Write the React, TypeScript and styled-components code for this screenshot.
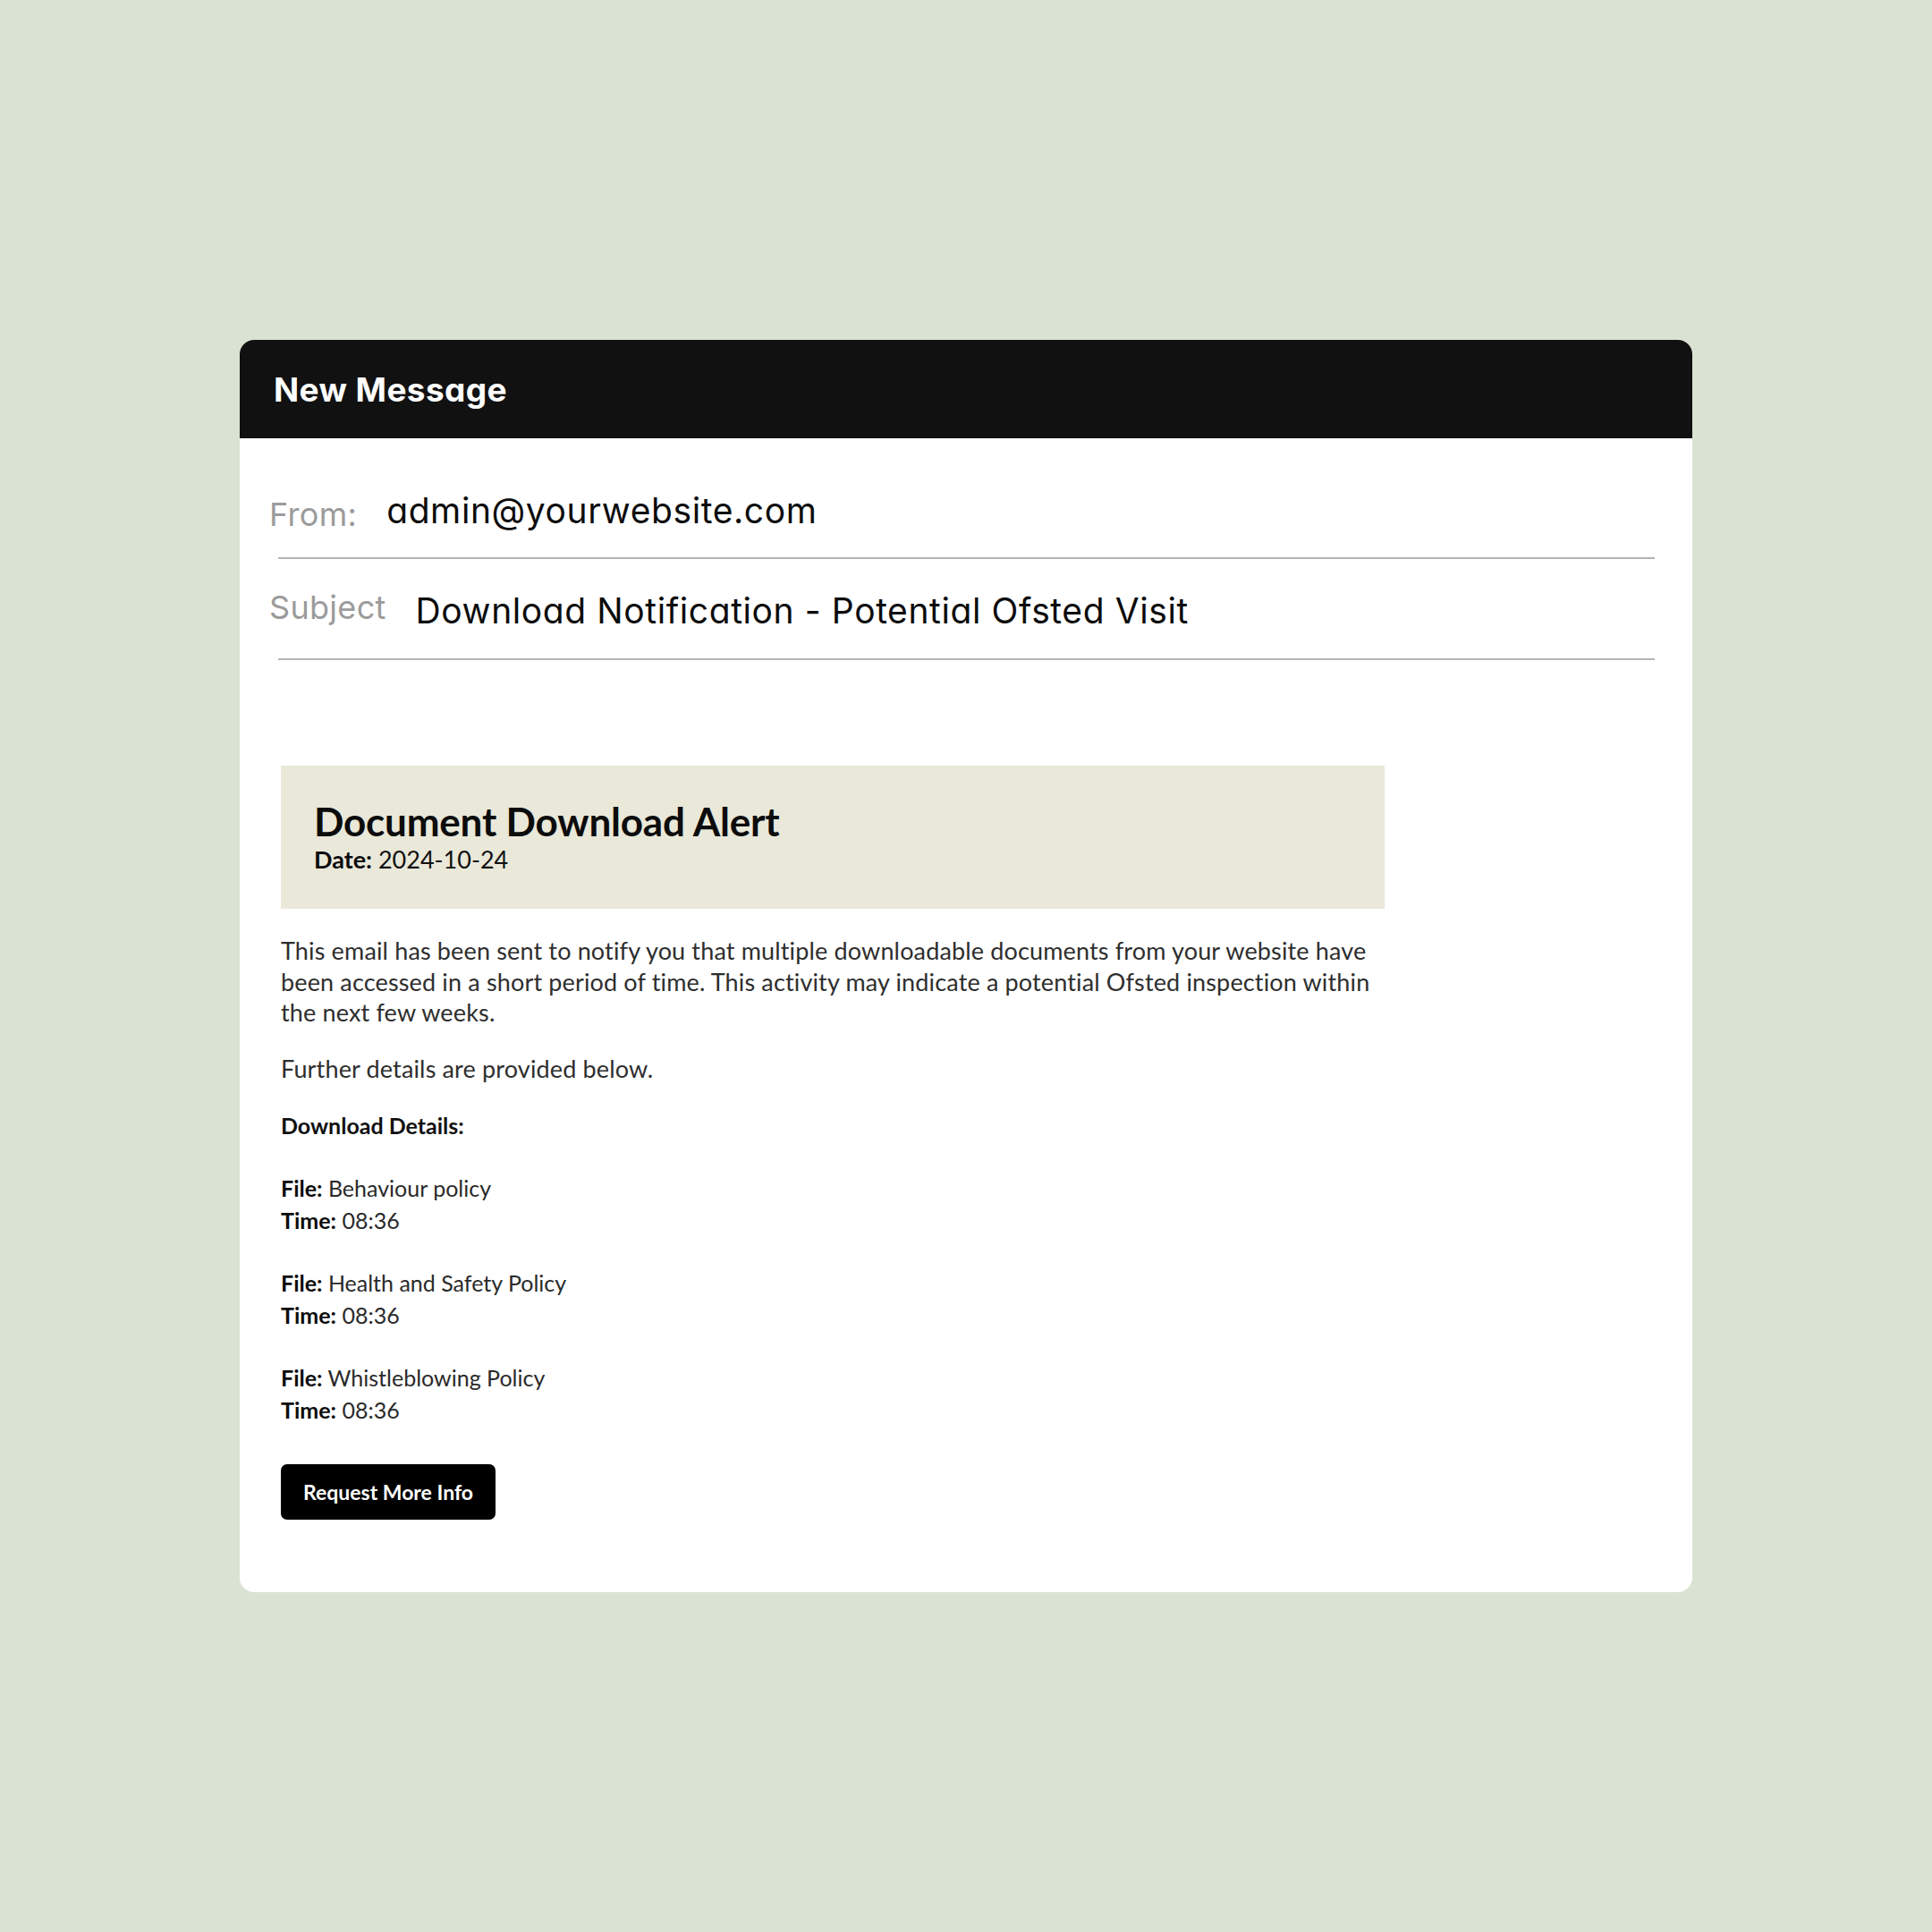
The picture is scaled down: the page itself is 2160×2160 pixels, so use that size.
import React from "react";
import styled, { createGlobalStyle } from "styled-components";

const GlobalStyle = createGlobalStyle`
  html, body {
    margin: 0;
    padding: 0;
    background: #dae3d3;
  }
  * { box-sizing: border-box; }
`;

const Page = styled.div`
  width: 2160px;
  height: 2160px;
  display: flex;
  align-items: center;
  justify-content: center;
`;

const Card = styled.div`
  width: 1624px;
  height: 1400px;
  background: #ffffff;
  border-radius: 16px;
  overflow: hidden;
  display: flex;
  flex-direction: column;
`;

const Header = styled.div`
  height: 110px;
  background: #111111;
  display: flex;
  align-items: center;
  padding: 0 38px;
  color: #ffffff;
  font-family: Inter, "Noto Sans", sans-serif;
  font-feature-settings: "cv11" 1;
  font-weight: 700;
  font-size: 37px;
  letter-spacing: 0.4px;
`;

const Fields = styled.div`
  display: flex;
  flex-direction: column;
  font-family: Inter, "Noto Sans", sans-serif;
  font-feature-settings: "cv11" 1;
`;

const FieldRow = styled.div<{ $height: number; $top: number }>`
  height: ${({ $height }) => $height}px;
  padding-top: ${({ $top }) => $top}px;
  display: flex;
  align-items: center;
  gap: 33px;
  padding-left: 33px;
`;

const Label = styled.span<{ $shift?: number }>`
  color: #9b9b9b;
  font-size: 36px;
  font-weight: 400;
  letter-spacing: 0.3px;
  position: relative;
  top: ${({ $shift }) => $shift ?? 0}px;
`;

const Value = styled.span`
  color: #0c0c0c;
  font-size: 39px;
  font-weight: 400;
  letter-spacing: 0.6px;
`;

const Divider = styled.div`
  height: 2px;
  margin: 0 42px 0 43px;
  background: #b4b4b4;
`;

const Email = styled.div`
  width: 1280px;
  padding: 118px 0 0 46px;
  font-family: Lato, "Open Sans", sans-serif;
  color: #2a2a2a;
`;

const AlertBox = styled.div`
  width: 1234px;
  height: 160px;
  background: #e9e8d9;
  padding: 36px 37px 0;
  display: flex;
  flex-direction: column;
`;

const AlertTitle = styled.div`
  font-size: 44px;
  font-weight: 700;
  color: #0c0c0c;
  line-height: 52px;
  letter-spacing: -0.2px;
`;

const DateLine = styled.div`
  font-size: 27px;
  line-height: 34px;
  color: #111;
`;

const Paragraph = styled.p<{ $top: number }>`
  margin: ${({ $top }) => $top}px 0 0;
  font-size: 27px;
  line-height: 34.5px;
  letter-spacing: 0.15px;
  color: #2e2e2e;
  white-space: nowrap;
`;

const DetailsHeading = styled.div`
  margin-top: 28px;
  font-size: 25px;
  line-height: 36px;
  font-weight: 700;
  color: #111;
`;

const FileGroup = styled.div`
  margin-top: 34px;
  font-size: 25px;
  line-height: 36px;
  color: #2a2a2a;
`;

const Line = styled.div``;

const Key = styled.b`
  color: #0c0c0c;
  font-weight: 700;
`;

const ActionButton = styled.button`
  margin-top: 43px;
  width: 240px;
  height: 62px;
  background: #000;
  color: #fff;
  border: none;
  border-radius: 7px;
  font-family: Lato, "Open Sans", sans-serif;
  font-size: 23px;
  font-weight: 700;
  cursor: pointer;
`;

const files = [
  { name: "Behaviour policy", time: "08:36" },
  { name: "Health and Safety Policy", time: "08:36" },
  { name: "Whistleblowing Policy", time: "08:36" },
];

export default function App() {
  return (
    <>
      <GlobalStyle />
      <Page>
        <Card>
          <Header>New Message</Header>
          <Fields>
            <FieldRow $height={133} $top={28}>
              <Label $shift={4}>From:</Label>
              <Value>admin@yourwebsite.com</Value>
            </FieldRow>
            <Divider />
            <FieldRow $height={111} $top={4}>
              <Label $shift={-4}>Subject</Label>
              <Value>Download Notification - Potential Ofsted Visit</Value>
            </FieldRow>
            <Divider />
          </Fields>
          <Email>
            <AlertBox>
              <AlertTitle>Document Download Alert</AlertTitle>
              <DateLine>
                <Key>Date:</Key> 2024-10-24
              </DateLine>
            </AlertBox>
            <Paragraph $top={30}>
              This email has been sent to notify you that multiple downloadable documents from your website have
              <br />
              been accessed in a short period of time. This activity may indicate a potential Ofsted inspection within
              <br />
              the next few weeks.
            </Paragraph>
            <Paragraph $top={28}>Further details are provided below.</Paragraph>
            <DetailsHeading>Download Details:</DetailsHeading>
            {files.map((f) => (
              <FileGroup key={f.name}>
                <Line>
                  <Key>File:</Key> {f.name}
                </Line>
                <Line>
                  <Key>Time:</Key> {f.time}
                </Line>
              </FileGroup>
            ))}
            <ActionButton>Request More Info</ActionButton>
          </Email>
        </Card>
      </Page>
    </>
  );
}
